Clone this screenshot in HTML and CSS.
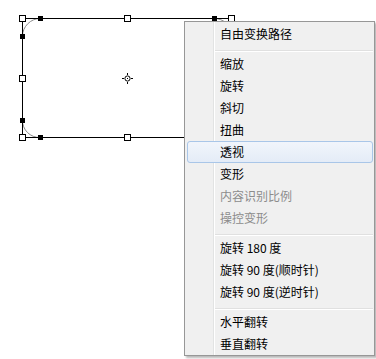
FILE: index.html
```html
<!DOCTYPE html>
<html lang="zh">
<head>
<meta charset="utf-8">
<title>Free Transform Path</title>
<link rel="stylesheet" href="styles.css">
</head>
<body>
<div class="canvas">
  <svg class="path-art" width="376" height="359" viewBox="0 0 376 359" xmlns="http://www.w3.org/2000/svg">
    <g class="curves" fill="none" stroke="#8a8a8a" stroke-width="1">
      <path d="M40 18.5 A18 18 0 0 0 22.5 36"/>
      <path d="M22.5 120 A17 17 0 0 0 40 137.5"/>
      <path d="M214 18.5 A17 17 0 0 1 231.5 36"/>
    </g>
    <g class="box" fill="none" stroke="#000" stroke-width="1" shape-rendering="crispEdges">
      <path d="M22.5 18.5 H231.5 V137.5 H22.5 Z"/>
    </g>
    <g class="anchors" fill="#000" shape-rendering="crispEdges">
      <rect x="38" y="16" width="5" height="5"/>
      <rect x="212" y="16" width="5" height="5"/>
      <rect x="20" y="34" width="5" height="5"/>
      <rect x="20" y="118" width="5" height="5"/>
      <rect x="38" y="135" width="5" height="5"/>
    </g>
    <g class="handles" fill="#fff" stroke="#000" stroke-width="1" shape-rendering="crispEdges">
      <rect x="19.5" y="15.5" width="6" height="6"/>
      <rect x="124.5" y="15.5" width="6" height="6"/>
      <rect x="228.5" y="15.5" width="6" height="6"/>
      <rect x="19.5" y="75.5" width="6" height="6"/>
      <rect x="19.5" y="134.5" width="6" height="6"/>
      <rect x="124.5" y="134.5" width="6" height="6"/>
    </g>
    <g class="pivot" fill="none" stroke="#000" stroke-width="1">
      <circle cx="127.5" cy="78.5" r="2.6"/>
      <path d="M127.5 73 V75 M127.5 82 V84 M122 78.5 H124 M131 78.5 H133" shape-rendering="crispEdges"/>
      <rect x="127" y="78" width="1" height="1" fill="#000" stroke="none"/>
    </g>
  </svg>

  <ul class="menu">
    <li class="item">自由变换路径</li>
    <li class="sep"></li>
    <li class="item">缩放</li>
    <li class="item">旋转</li>
    <li class="item">斜切</li>
    <li class="item">扭曲</li>
    <li class="item hover">透视</li>
    <li class="item">变形</li>
    <li class="item disabled">内容识别比例</li>
    <li class="item disabled">操控变形</li>
    <li class="sep"></li>
    <li class="item">旋转 180 度</li>
    <li class="item">旋转 90 度(顺时针)</li>
    <li class="item">旋转 90 度(逆时针)</li>
    <li class="sep"></li>
    <li class="item">水平翻转</li>
    <li class="item">垂直翻转</li>
  </ul>
</div>
</body>
</html>
```

FILE: styles.css
```css
html, body {
  margin: 0;
  padding: 0;
  background: #fff;
}

.canvas {
  position: relative;
  width: 376px;
  height: 359px;
  overflow: hidden;
}

.path-art {
  display: block;
}

.menu {
  position: absolute;
  left: 184px;
  top: 21px;
  width: 186px;
  margin: 0;
  padding: 1px 1px 0 2px;
  list-style: none;
  background: #f0f0f0;
  border: 1px solid #979797;
  box-shadow: 2px 2px 2px rgba(0, 0, 0, 0.28);
  font-family: "Noto Sans CJK SC", "Noto Sans", sans-serif;
  font-size: 12px;
  color: #000;
}

.menu::before {
  content: "";
  position: absolute;
  left: 28px;
  top: 0;
  bottom: 0;
  width: 1px;
  background: #e2e3e3;
  border-right: 1px solid #fff;
}

.item {
  position: relative;
  height: 22px;
  line-height: 22px;
  padding-left: 33px;
  white-space: nowrap;
  box-sizing: border-box;
}

.item.disabled {
  color: #8c8c8c;
}

.item.hover {
  background: linear-gradient(#f1f5fb, #e4ecf7);
  border: 1px solid #a9c6e8;
  border-radius: 3px;
  line-height: 20px;
  padding-left: 32px;
}

.sep {
  position: relative;
  height: 8px;
}

.sep::after {
  content: "";
  position: absolute;
  left: 28px;
  right: 0;
  top: 5px;
  height: 1px;
  background: #e0e0e0;
  border-bottom: 1px solid #fff;
}
```
